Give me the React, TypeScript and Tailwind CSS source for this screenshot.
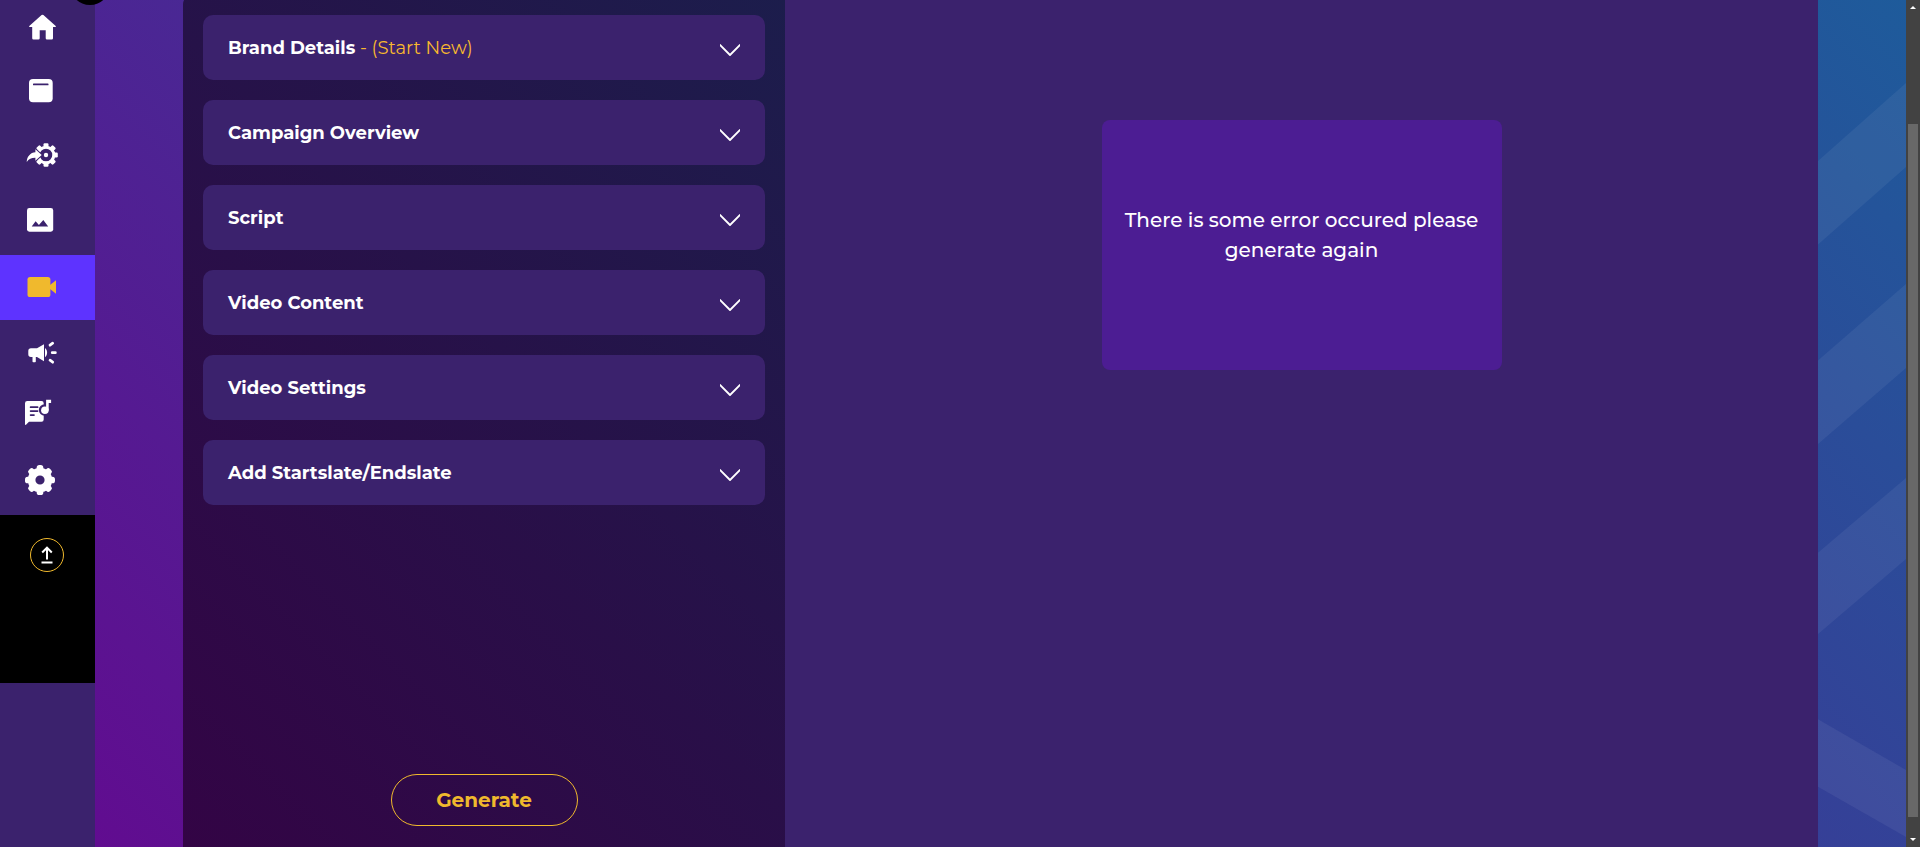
import React, { useState } from "react";

const TEETH = [0, 45, 90, 135, 180, 225, 270, 315];

function Icon({ children }: { children: React.ReactNode }) {
  return (
    <svg viewBox="0 0 32 32" className="size-8 overflow-visible fill-current" aria-hidden="true">
      {children}
    </svg>
  );
}

const HomeIcon = () => (
  <Icon>
    <path d="M16.6 4.1q.9-.8 1.8 0L30.7 15q.8 1-.5 1.1H28v11.2q0 1.3-1.3 1.3h-4.7q-1.3 0-1.3-1.3v-8h-6v8q0 1.3-1.3 1.3H8.500q-1.300 0-1.300-1.300V16.100H4.800q-1.300-.1-.5-1.100z" />
  </Icon>
);

const TemplateIcon = () => (
  <Icon>
    <rect x="4" y="3" width="23.7" height="23.300" rx="4" />
    <rect x="8" y="7.500" width="15.500" height="1.800" rx=".6" fill="#3b226d" />
  </Icon>
);

const AutomateIcon = () => (
  <Icon>
    {TEETH.map((a) => (
      <rect key={a} x="18.500" y="2.200" width="5" height="5" rx="1.200" transform={`rotate(${a} 21 14)`} />
    ))}
    <circle cx="21" cy="14" r="7.800" fill="none" stroke="currentColor" strokeWidth="3" />
    <circle cx="21" cy="14" r="2.200" />
    <path
      d="M1.700 20.900C2 15.500 5.500 11.600 10.400 11.300V8.300L16.700 14l-6.300 5.700v-3C6.600 16.600 3.800 18 1.700 20.900z"
      stroke="#3b226d"
      strokeWidth="2"
      paintOrder="stroke"
    />
  </Icon>
);

const ImageIcon = () => (
  <Icon>
    <rect x="2" y="2" width="26.200" height="23.700" rx="2.400" />
    <path d="M6.700 20.400 10.600 15.200l3.300 3.900 4.400-5.200 4.900 6.500z" fill="#3b226d" />
  </Icon>
);

const VideoIcon = () => (
  <Icon>
    <rect x="2.500" y="6" width="22.900" height="20" rx="2.600" />
    <path d="M25 13.900 31 9.300v13.500L25 18z" />
  </Icon>
);

const MegaphoneIcon = () => (
  <Icon>
    <path d="M6 12.200h6L19 8.200v17l-7-4.300h-1.200v4.600q0 .8-.8.8H8.300q-.8 0-.8-.8v-4.600H6q-2.700 0-2.700-2.700v-3.300q0-2.700 2.700-2.700z" />
    <path d="M20 12c2.800 2.200 2.800 7 0 9.200z" />
    <path
      d="M25 9.200 27.700 7.200M27.200 16.700h3.200M25 24.200l2.700 2"
      fill="none"
      stroke="currentColor"
      strokeWidth="2.700"
      strokeLinecap="round"
    />
  </Icon>
);

const AudioIcon = () => (
  <Icon>
    <path d="M2.300 0h14.200q2.200 0 2.200 2.200v16.300q0 2.200-2.200 2.200H4L1 23.800q-1 .5-1-.6V2.300Q0 0 2.300 0z" />
    <circle cx="19.600" cy="9" r="5.800" fill="#3b226d" />
    <circle cx="19.900" cy="9.200" r="3.800" />
    <path d="M21.100-1.200h5v3.200h-2.400v7.200h-2.600z" />
    <path
      d="M5.600 6.200h7M5.600 10.100h7M5.600 14.100h3.400"
      stroke="#3b226d"
      strokeWidth="1.700"
      strokeLinecap="round"
    />
  </Icon>
);

const SettingsIcon = () => (
  <Icon>
    {TEETH.map((a) => (
      <rect key={a} x="11.700" y="-1" width="6.600" height="8" rx="2.600" transform={`rotate(${a} 15 14)`} />
    ))}
    <circle cx="15" cy="14" r="8.400" fill="none" stroke="currentColor" strokeWidth="7.600" />
  </Icon>
);

const NAV = [
  { label: "Home", Draw: HomeIcon },
  { label: "Templates", Draw: TemplateIcon },
  { label: "Automation", Draw: AutomateIcon },
  { label: "Images", Draw: ImageIcon },
  { label: "Video", Draw: VideoIcon },
  { label: "Campaigns", Draw: MegaphoneIcon },
  { label: "Audio", Draw: AudioIcon },
  { label: "Settings", Draw: SettingsIcon },
];

function Sidebar() {
  return (
    <aside className="relative w-[95px] shrink-0 bg-[#3b226d]">
      <nav className="-mt-[5px] flex flex-col text-white">
        {NAV.map(({ label, Draw }) => (
          <a
            key={label}
            href="#"
            aria-label={label}
            className={
              label === "Video"
                ? "block h-[65px] bg-[#5e33ff] pt-4 pl-[25px] text-[#f0b92d]"
                : "block h-[65px] pt-4 pl-[25px]"
            }
          >
            <Draw />
          </a>
        ))}
      </nav>
      <div className="flex h-[168px] bg-black pt-[23px] pl-[30px]">
        <button
          aria-label="Upload"
          className="flex size-[34px] items-center justify-center rounded-full border border-[#f0b92d] text-white"
        >
          <svg viewBox="0 0 12 18" className="h-[18px] w-3" fill="none" stroke="currentColor" strokeWidth="2" aria-hidden="true">
            <path d="M6 13.500V2M1.200 6.500 6 1.700l4.800 4.800M.500 16.500h11" />
          </svg>
        </button>
      </div>
      <span className="absolute -top-[35px] left-[70px] z-10 size-10 rounded-full bg-black" />
    </aside>
  );
}

const SECTIONS = [
  { title: "Brand Details", note: "- (Start New)" },
  { title: "Campaign Overview" },
  { title: "Script" },
  { title: "Video Content" },
  { title: "Video Settings" },
  { title: "Add Startslate/Endslate" },
];

function Section({ title, note }: { title: string; note?: string }) {
  const [open, setOpen] = useState(false);
  return (
    <button
      aria-expanded={open}
      onClick={() => setOpen(!open)}
      className="flex h-[65px] w-full items-center justify-between rounded-[10px] bg-[#3b226d] px-[25px] text-left text-lg text-white"
    >
      <span>
        <span className="font-bold">{title}</span>
        {note && <span className="text-[#f8b92d]"> {note}</span>}
      </span>
      <svg viewBox="0 0 20 12" className="mt-1 h-3 w-5" fill="none" stroke="currentColor" strokeWidth="1.800" strokeLinecap="round" strokeLinejoin="round" aria-hidden="true">
        <path d="M0 1 10 11 20 1" />
      </svg>
    </button>
  );
}

function Stripes() {
  return (
    <svg viewBox="0 0 88 847" preserveAspectRatio="none" className="absolute inset-y-0 right-0 h-full w-[88px] fill-white/6" aria-hidden="true">
      <path d="M0 161 88 83v84L0 244.500z" />
      <path d="M0 360.500 88 284v84L0 444z" />
      <path d="M0 552.700 88 478v81L0 634z" />
      <path d="M0 719.300 88 770v67L0 786.700z" />
    </svg>
  );
}

function ScrollRail() {
  return (
    <div className="flex w-[14px] shrink-0 flex-col items-center bg-[#424242]" aria-hidden="true">
      <svg viewBox="0 0 6 3" className="mt-[6px] h-[3px] w-[6px] fill-white">
        <path d="M3 0 6 3H0z" />
      </svg>
      <div className="mt-[115px] w-[10px] grow bg-[#686868]" />
      <svg viewBox="0 0 6 3" className="mt-[21px] mb-[6px] h-[3px] w-[6px] fill-white">
        <path d="M0 0h6L3 3z" />
      </svg>
    </div>
  );
}

export default function App() {
  return (
    <div className="flex min-h-screen overflow-hidden font-['Montserrat','Inter',sans-serif]">
      <Sidebar />
      <main className="relative grid min-w-0 grow grid-cols-[602px_1fr] bg-[linear-gradient(45deg,#610c90,#1e5b9b)] px-[88px]">
        <Stripes />
        <section className="-mt-1 flex flex-col rounded-tl-lg bg-[linear-gradient(45deg,#330445,#1c1d4c)] px-5 pt-[19px] pb-[21px]">
          <div className="flex flex-col gap-5">
            {SECTIONS.map((s) => (
              <Section key={s.title} {...s} />
            ))}
          </div>
          <button className="mx-auto mt-auto h-[52px] w-[187px] rounded-full border border-[#f0b92d] text-xl font-bold text-[#f0b92d]">
            Generate
          </button>
        </section>
        <section className="flex items-start justify-center bg-[#3b226d] pt-[120px]">
          <div className="flex h-[250px] w-[400px] items-center justify-center rounded-lg bg-[#4c1d93] px-4 pb-5">
            <p className="text-center text-xl/[30px] font-medium text-white">
              There is some error occured please generate again
            </p>
          </div>
        </section>
      </main>
      <ScrollRail />
    </div>
  );
}
